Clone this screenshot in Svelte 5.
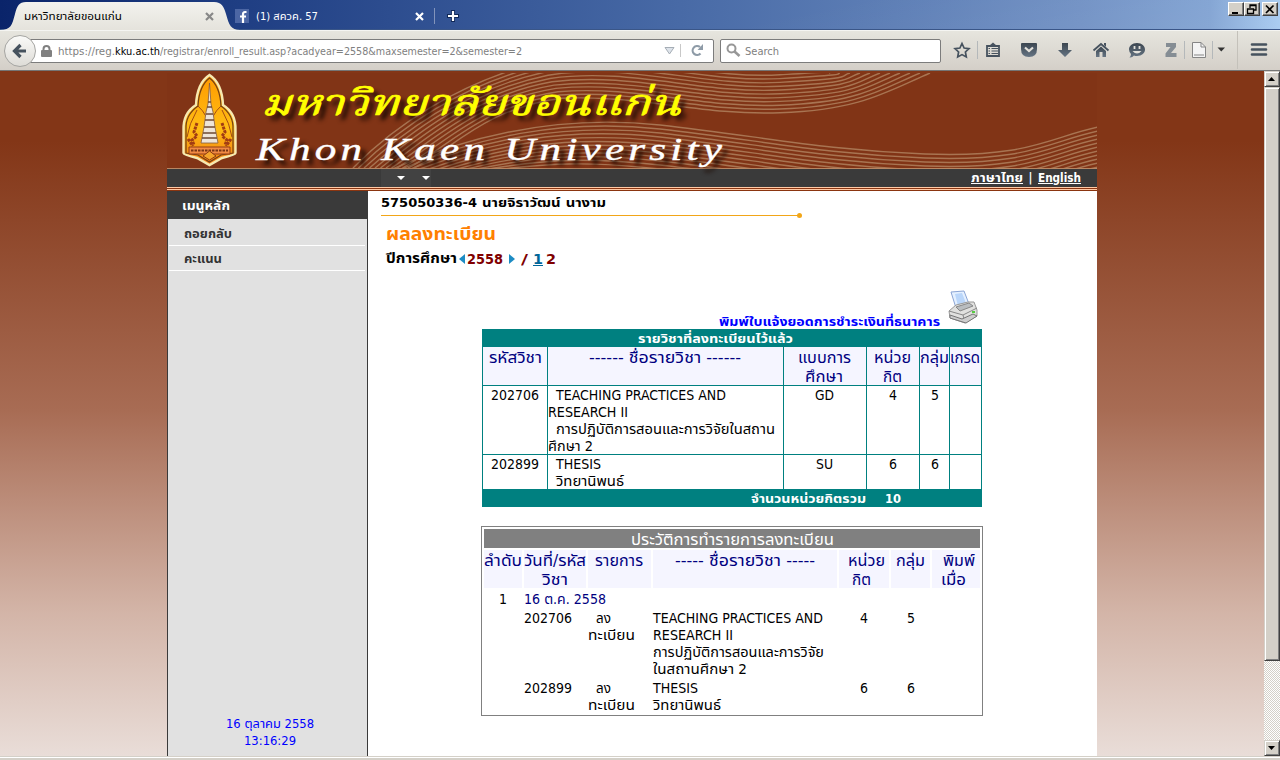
<script lang="ts">
  // Scales a run of text horizontally so that it takes exactly `w` pixels.
  function fit(node: HTMLElement, w: number) {
    const natural = node.getBoundingClientRect().width;
    if (!w || !natural) return;
    node.style.transform = `scaleX(${w / natural})`;
    node.style.marginRight = `${w - natural}px`;
  }

  type Line = [string, number, number];
  const head: Line[][] = [
    [['รหัสวิชา', 53, 6]],
    [['------ ชื่อรายวิชา ------', 152, 41]],
    [['แบบการ', 53, 14], ['ศึกษา', 38, 21]],
    [['หน่วย', 37, 7], ['กิต', 19, 16]],
    [['กลุ่ม', 29, 0]],
    [['เกรด', 30, 0]]
  ];
  const rows: Line[][][] = [
    [
      [['202706', 48, 8]],
      [['TEACHING PRACTICES AND', 170, 8], ['RESEARCH II', 80, 0], ['การปฏิบัติการสอนและการวิจัยในสถาน', 219, 8], ['ศึกษา 2', 45, 0]],
      [['GD', 19, 31]],
      [['4', 8, 22]],
      [['5', 8, 11]],
      []
    ],
    [
      [['202899', 48, 8]],
      [['THESIS', 45, 8], ['วิทยานิพนธ์', 68, 8]],
      [['SU', 17, 32]],
      [['6', 8, 22]],
      [['6', 8, 11]],
      []
    ]
  ];
  const histHead: Line[][] = [
    [['ลำดับ', 38, 0]],
    [['วันที่/รหัส', 62, 0], ['วิชา', 26, 18]],
    [['รายการ', 48, 7]],
    [['----- ชื่อรายวิชา -----', 140, 22]],
    [['หน่วย', 37, 9], ['กิต', 19, 13]],
    [['กลุ่ม', 29, 5]],
    [['พิมพ์', 32, 11], ['เมื่อ', 25, 9]]
  ];
  const histRows: Line[][][] = [
    [
      [],
      [['202706', 48, 0]],
      [['ลง', 15, 8], ['ทะเบียน', 47, 0]],
      [['TEACHING PRACTICES AND', 170, 0], ['RESEARCH II', 80, 0], ['การปฏิบัติการสอนและการวิจัย', 171, 0], ['ในสถานศึกษา 2', 94, 0]],
      [['4', 8, 21]],
      [['5', 8, 16]],
      []
    ],
    [
      [],
      [['202899', 48, 0]],
      [['ลง', 15, 8], ['ทะเบียน', 47, 0]],
      [['THESIS', 45, 0], ['วิทยานิพนธ์', 68, 0]],
      [['6', 8, 21]],
      [['6', 8, 16]],
      []
    ]
  ];
  const waves = Array.from({ length: 12 }, (_, i) => i);
</script>

{#snippet t(text: string, w: number, ml: number = 0)}
  <span class="t" style:margin-left="{ml}px" use:fit={w}>{text}</span>
{/snippet}

{#snippet cell(lines: Line[])}
  <div class="cell">
    {#each lines as l}<div class="line">{@render t(l[0], l[1], l[2])}</div>{/each}
  </div>
{/snippet}

<div class="window">
  <header class="tabs">
    <svg class="tabshape" width="240" height="30">
      <defs><linearGradient id="tab" x1="0" y1="0" x2="0" y2="1"><stop offset="0" stop-color="#f3f2ee" /><stop offset="1" stop-color="#e5e3dc" /></linearGradient></defs>
      <path d="M0 30C11 30 12 25 15 14C17 6 19 2 26 2H214C222 2 224 7 226 14C229 25 231 30 240 30Z" fill="url(#tab)" />
    </svg>
    <div class="tab one">
      {@render t('มหาวิทยาลัยขอนแก่น', 98)}
      <svg width="9" height="9"><path d="M1 1L8 8M8 1L1 8" stroke="#888" stroke-width="2.2" /></svg>
    </div>
    <div class="tab two">
      <svg width="14" height="14"><rect width="14" height="14" fill="#4c66a4" /><path d="M8 14V5.500Q8 3 10 3H11.500M5 7.500H11" fill="none" stroke="#fff" stroke-width="2.2" /></svg>
      {@render t('(1) สควค. 57', 62, 7)}
      <svg class="close" width="9" height="9"><path d="M1 1L8 8M8 1L1 8" stroke="#fff" stroke-width="2.2" /></svg>
    </div>
    <svg class="plus" width="12" height="12"><path d="M6 0V12M0 6H12" stroke="#102858" stroke-width="4" /><path d="M6 1V11M1 6H11" stroke="#fff" stroke-width="2.2" /></svg>
    <div class="winbtns">
      <b><svg width="12" height="11"><path d="M2 9H8" stroke="#000" stroke-width="2" /></svg></b>
      <b><svg width="12" height="11"><path d="M4 4V1H10V6H8M4 1.500H10M1.500 5H7.500V9.500H1.500ZM1 5H8" fill="none" stroke="#000" stroke-width="1.3" /></svg></b>
      <b class="x"><svg width="12" height="11"><path d="M2 1.500L9.500 9M9.500 1.500L2 9" stroke="#000" stroke-width="1.7" /></svg></b>
    </div>
  </header>

  <div class="toolbar">
    <div class="back"><svg width="16" height="16"><path d="M8.500 2L2.500 8L8.500 14M3 8H14" fill="none" stroke="#46525e" stroke-width="3.2" /></svg></div>
    <div class="url">
      <svg width="11" height="12"><path d="M2.500 6V4Q2.500 1 5.500 1T8.500 4V6" fill="none" stroke="#808080" stroke-width="2" /><rect y="5" width="11" height="7" rx="1" fill="#808080" /></svg>
      {@render t('https://reg.', 57, 6)}
      <span class="host">{@render t('kku.ac.th', 45)}</span>
      {@render t('/registrar/enroll_result.asp?acadyear=2558&maxsemester=2&semester=2', 362)}
      <svg class="drop" width="11" height="8"><path d="M1 .5H10L5.500 7Z" fill="#dde3ea" stroke="#a5adb5" /></svg>
      <svg class="reload" width="13" height="13" viewBox="0 0 13 13"><path d="M9.500 9.500A4.500 4.500 0 1 1 9 3" fill="none" stroke="#8e9ba7" stroke-width="2.200" /><path d="M12 0V6H6.500Z" fill="#8e9ba7" /></svg>
    </div>
    <div class="search">
      <svg width="15" height="15"><circle cx="5.500" cy="5.500" r="4" fill="none" stroke="#979797" stroke-width="2" /><path d="M8.500 8.500L13.500 13" stroke="#979797" stroke-width="2.600" /></svg>
      {@render t('Search', 34, 4)}
    </div>
    <svg class="icons" width="339" height="39" viewBox="941 31 339 39">
      <defs><linearGradient id="ic" x1="0" y1="0" x2="0" y2="1"><stop offset="0" stop-color="#3c4650" /><stop offset="1" stop-color="#667584" /></linearGradient></defs>
      <path d="M962 43.500L964.100 48L969 48.600L965.400 52L966.300 57L962 54.600L957.700 57L958.600 52L955 48.600L959.900 48Z" fill="none" stroke="#46525e" stroke-width="1.700" />
      <path d="M977.500 41V59M1184.500 41V59M1212.500 41V59" stroke="#b4b8ba" />
      <path d="M1237.500 31V69" stroke="#c4c1ba" />
      <path d="M987 46H999V56H987Z" fill="none" stroke="#46525e" stroke-width="1.800" />
      <path d="M989 46L993 42.500L997 46Z" fill="#46525e" />
      <path d="M988.500 48.500H990M991.500 48.500H998M988.500 51H990M991.500 51H998M988.500 53.500H990M991.500 53.500H998" stroke="#46525e" stroke-width="1.200" />
      <path d="M1022 43H1036Q1037 43 1037 44V49Q1037 57 1029 57T1021 49V44Q1021 43 1022 43Z" fill="url(#ic)" />
      <path d="M1025 47.500L1029 51L1033 47.500" fill="none" stroke="#e3e1db" stroke-width="2.200" />
      <path d="M1062 43H1068V50H1072L1065 57L1058 50H1062Z" fill="url(#ic)" />
      <path d="M1093.500 50.500L1101 44L1108.500 50.500" fill="none" stroke="#46525e" stroke-width="1.800" />
      <path d="M1096 51L1101 46.500L1106 51V57H1102.500V52H1099.500V57H1096Z" fill="url(#ic)" /><path d="M1104 43H1106V47L1104 45Z" fill="#46525e" />
      <path d="M1137 43C1142 43 1145 46 1145 49.500S1142 56 1137 56Q1135 56 1134 55.500Q1132 58 1129.500 57.500Q1131 56 1131 54Q1129 52 1129 49.500C1129 46 1132 43 1137 43Z" fill="url(#ic)" />
      <path d="M1134.500 46V49M1139.500 46V49" stroke="#e3e1db" stroke-width="1.800" /><path d="M1132.500 51H1141.500Q1137 56 1132.500 51Z" fill="#e3e1db" />
      <path d="M1166 43H1176V47L1171 53H1176.500V57H1165.500V53.500L1170.500 47H1166Z" fill="#858d94" />
      <path d="M1192.500 42.500H1201L1205.500 47V57.500H1192.500Z" fill="#f4f4f4" stroke="#858585" /><path d="M1201 42.500V47H1205.500M1194 55H1204" fill="none" stroke="#858585" />
      <path d="M1217.500 47.500H1225L1221.300 51.500Z" fill="#333" />
      <path d="M1252 44.500H1266M1252 49.500H1266M1252 54.500H1266" stroke="#46525e" stroke-width="2.600" stroke-linecap="round" />
    </svg>
  </div>

  <div class="viewport">
    <div class="page">
      <div class="banner">
        <svg width="930" height="95" viewBox="167 73 930 95">
          <defs>
            <linearGradient id="gold" x1="0" y1="0" x2="0" y2="1"><stop offset="0" stop-color="#ff9a00" /><stop offset=".6" stop-color="#ffbd14" /><stop offset="1" stop-color="#f27a12" /></linearGradient>
          </defs>
          <g fill="none" stroke="#b58a66" stroke-width="1.400" opacity=".75">
            {#each waves as i}
              <path d="M{353 + i * 5.5} 168C{395 + i * 5} {125 + i * 2.5} {460 + i * 2} {82 + i * 2.4} {540 + i * 2} {62 + i * 3.3}C{620 + i * 2} {44 + i * 4.6} 700 {76 + i * 3.6} 780 {71 + i * 3.8}S{820 + i * 6} {70 + i * 2} {820 + i * 10} 73" />
              <path d="M{390 + i * 9} 170C{470 + i * 5} {135 + i * 3} 560 {114 + i * 4} 660 {125 + i * 4}S820 {150 + i * 4} 925 {154 + i * 4}S1050 {137 + i * 4} 1098 {127 + i * 4}" />
            {/each}
          </g>
          <path d="M209.500 75Q222 83 223 105Q236 113 235.500 130V153Q235 155 222 158L209.500 165L197 158Q184 155 183.500 153V130Q183 113 196 105Q197 83 209.500 75Z" fill="url(#gold)" stroke="#f6e9b0" stroke-width="2.400" />
          <path d="M209.500 78Q220 86 221 106Q234 115 233 130V153L221 155L209.500 162L198 155L186 153V130Q185 115 198 106Q199 86 209.500 78Z" fill="none" stroke="#713f16" stroke-width="1.200" />
          <path d="M198 106Q208 115 209 128M221 106Q211 115 210 128M187 137Q189 124 197 110M232 137Q230 124 222 110" fill="none" stroke="#a54c12" />
          <path d="M209.500 83L211 104L213 112L215 127L218 143H201L204 127L206 112L208 104Z" fill="#eee5d8" stroke="#815b42" stroke-width=".8" />
          <path d="M208 102H211M207 107H212M206 114H213M205 120H214M204 127H215M203 133H216M202 138H217" stroke="#6d4933" stroke-width="1.300" />
          <path d="M197 123L194 132L197 136L192 140L194 145M222 123L225 132L222 136L227 140L225 145M188 139L193 146M231 139L226 146" fill="none" stroke="#a23d13" stroke-width="3" stroke-dasharray="3 .8" />
          <path d="M189 147H230V154H189Z" fill="#f08a43" stroke="#943d15" />
          <path d="M191 150.500H228" stroke="#773415" stroke-width="2.200" stroke-dasharray="2.500 1" />
          <path d="M203 156L209.500 151L216 156L209.500 160Z" fill="#f5a52b" stroke="#8b3b11" />
        </svg>
        <div class="thai">{@render t('มหาวิทยาลัยขอนแก่น', 420)}</div>
        <div class="eng">{@render t('Khon Kaen University', 470)}</div>
      </div>
      <nav class="lang">
        <div class="drops"><i></i><i></i></div>
        <a href="#th">{@render t('ภาษาไทย', 52)}</a>
        <span class="bar">|</span>
        <a href="#en">{@render t('English', 43)}</a>
      </nav>
      <div class="stripe"></div>
      <div class="cols">
        <aside>
          <div class="menuhead">{@render t('เมนูหลัก', 48)}</div>
          <div class="item">{@render t('ถอยกลับ', 48)}</div>
          <div class="item low">{@render t('คะแนน', 38)}</div>
          <div class="clock">
            <div>{@render t('16 ตุลาคม 2558', 88)}</div>
            <div>{@render t('13:16:29', 52)}</div>
          </div>
        </aside>
        <main>
          <div class="name">{@render t('575050336-4', 96)}{@render t('นายจิราวัฒน์ นางาม', 124, 5)}</div>
          <div class="rule"><i></i></div>
          <div class="title">{@render t('ผลลงทะเบียน', 110)}</div>
          <div class="year">
            {@render t('ปีการศึกษา', 71)}
            <svg width="10" height="10"><path d="M8 0V10L2 5Z" fill="#1d8cc4" /></svg>
            <span class="red">{@render t('2558', 36)}</span>
            <svg class="next" width="8" height="10"><path d="M1 0V10L7 5Z" fill="#1d8cc4" /></svg>
            <span class="red">{@render t('/', 7, 5)}</span>
            <a href="#sem1">{@render t('1', 10, 5)}</a>
            <span class="red">{@render t('2', 10, 3)}</span>
          </div>
          <div class="print">
            {@render t('พิมพ์ใบแจ้งยอดการชำระเงินที่ธนาคาร', 221)}
            <svg width="32" height="34" viewBox="0 0 32 34">
              <path d="M3 2L16 1L21 14L8 18Z" fill="#e4f0ff" stroke="#8ba5d5" /><path d="M7 4L14 3L18 13L10 16Z" fill="#bad6fa" />
              <path d="M1 21L8 15L20 12L26 12L29 20V26L17 33L2 28Z" fill="#e1e1df" stroke="#999" />
              <path d="M1 21L15 25L29 18M15 25L17 33" fill="none" stroke="#888" /><path d="M8 17L21 13L25 16L12 21Z" fill="#b9bdc0" stroke="#888" />
              <path d="M2 25L14 29L25 24L29 26L18 33L2 28Z" fill="#cecece" stroke="#777" /><path d="M24 22H27" stroke="#55cc42" stroke-width="2" />
            </svg>
          </div>
          <section class="teal">
            <div class="caption">{@render t('รายวิชาที่ลงทะเบียนไว้แล้ว', 155)}</div>
            <div class="grid h">{#each head as c}{@render cell(c)}{/each}</div>
            {#each rows as r}<div class="grid">{#each r as c}{@render cell(c)}{/each}</div>{/each}
            <div class="total">{@render t('จำนวนหน่วยกิตรวม', 115)}{@render t('10', 16, 19)}</div>
          </section>
          <section class="history">
            <div class="hcap">{@render t('ประวัติการทำรายการลงทะเบียน', 203)}</div>
            <div class="hgrid h">{#each histHead as c}{@render cell(c)}{/each}</div>
            <div class="hdate">{@render t('1', 8, 15)}<span class="date">{@render t('16 ต.ค. 2558', 82)}</span></div>
            {#each histRows as r}<div class="hgrid body">{#each r as c}{@render cell(c)}{/each}</div>{/each}
          </section>
        </main>
      </div>
    </div>
    <div class="scroll">
      <b><svg width="8" height="4"><path d="M0 4H7L3.500 0Z" /></svg></b>
      <b class="thumb"></b>
      <b class="down"><svg width="8" height="4"><path d="M0 0H7L3.500 4Z" /></svg></b>
    </div>
  </div>
  <footer></footer>
</div>

<style>
  :global(body) { margin: 0; overflow: hidden; }
  .window { width: 1280px; height: 760px; display: flex; flex-direction: column; overflow: hidden; font-family: Tahoma, "DejaVu Sans Condensed", "Noto Sans Thai", Loma, "Noto Sans", sans-serif; font-size: 13.5px; color: #000; }
  .t { display: block; flex: none; width: max-content; white-space: pre; transform-origin: 0 50%; }
  a { color: inherit; text-decoration: underline; }
  svg { display: block; flex: none; }

  .tabs { height: 29px; flex: none; position: relative; display: flex; align-items: center; border-bottom: 1px solid #3a5688; background: linear-gradient(168deg, #ffffff00 60%, #ffffff10), linear-gradient(90deg, #0a246a 0, #1f3e83 240px, #486aa6 680px, #7191c4 1080px, #80a2d2 1210px, #a6caf0 1280px); font-size: 11px; }
  .tabshape { position: absolute; left: 0; top: 0; }
  .tab { display: flex; align-items: center; position: relative; height: 16px; line-height: 17px; margin-top: 3px; }
  .one { margin-left: 24px; width: 190px; justify-content: space-between; }
  .two { margin-left: 21px; width: 199px; color: #fff; border-right: 1px solid #8294bb; }
  .two .close { margin-left: 97px; }
  .plus { margin: 3px 0 0 12px; }
  .winbtns { display: flex; margin: -12px 2px 0 auto; }
  .winbtns b { box-sizing: border-box; width: 16px; height: 14px; background: #d4d0c8; border: 1px solid; border-color: #fff #404040 #404040 #fff; box-shadow: inset -1px -1px #808080; padding: 1px; }
  .winbtns .x { margin-left: 2px; }

  .toolbar { box-sizing: border-box; height: 41px; flex: none; display: flex; align-items: center; background: linear-gradient(#e6e5de, #d4cfc8); border-top: 1px solid #f5f5f2; border-bottom: 1px solid #757575; font-size: 11px; color: #808080; }
  .back { box-sizing: border-box; width: 32px; height: 32px; border-radius: 50%; border: 1px solid #a5a5a2; background: linear-gradient(#fafaf8, #dedcd7); display: flex; align-items: center; justify-content: center; margin-left: 4px; z-index: 1; }
  .url, .search { box-sizing: border-box; height: 24px; border: 1px solid #7c7c7c; background: #fff; border-radius: 2px; display: flex; align-items: center; }
  .url { width: 690px; margin-left: -12px; padding-left: 16px; }
  .url .t, .search .t { margin-top: 1px; }
  .host { color: #000; }
  .drop { margin-left: 142px; }
  .reload { margin-left: 5px; padding-left: 10px; border-left: 1px solid #c8c8c8; }
  .search { width: 221px; margin-left: 6px; padding-left: 5px; }

  .viewport { flex: 1; display: flex; justify-content: space-between; min-height: 0; background: linear-gradient(#833617 0, #833617 70px, #a86c54 340px, #d3b4a7 540px, #e9ddd8 685px); }
  .page { width: 930px; margin: 2px 0 0 167px; display: flex; flex-direction: column; }
  .banner { position: relative; height: 95px; flex: none; background: #813416; border-bottom: 1px solid #b78562; }
  .thai, .eng { position: absolute; font-style: italic; text-shadow: 4px 5px 4px #1d0a03; }
  .thai { left: 94px; top: 5px; font: italic 36px/56px "Norasi", "Noto Serif Thai", "Liberation Serif", serif; color: #ff0; -webkit-text-stroke: .7px #ff0; }
  .eng { left: 89px; top: 60px; font: italic 31px/34px "Z003", "URW Chancery L", "Liberation Serif", serif; color: #fff; letter-spacing: 3px; -webkit-text-stroke: .4px #fff; }
  .lang { height: 18px; flex: none; background: #3a3a3a; display: flex; align-items: center; color: #fff; font-weight: bold; font-size: 12px; line-height: 18px; }
  .drops { display: flex; gap: 17px; align-items: center; margin-left: 214px; width: 34px; height: 18px; background: #424242; padding-left: 16px; margin-right: 540px; }
  .drops i { border: 4px solid transparent; border-top-color: #fff; border-bottom: 0; }
  .bar { width: 15px; text-align: center; }
  .stripe { height: 4px; flex: none; background: linear-gradient(#ffc9a5 0 1px, #8b3510 1px 2px, #ffc9a5 2px 3px, #8b3510 3px); }
  .cols { flex: 1; min-height: 0; display: flex; }
  aside { box-sizing: border-box; width: 201px; background: #e1e1e1; border: solid #3a3a3a; border-width: 0 1px; display: flex; flex-direction: column; font-weight: bold; font-size: 12px; color: #333; }
  .menuhead { background: #3a3a3a; color: #fff; height: 28px; line-height: 30px; padding-left: 14px; }
  .item { height: 26px; line-height: 30px; margin: 0 2px 0 1px; padding-left: 15px; border-bottom: 1px solid #fff; }
  .low { height: 24px; line-height: 27px; }
  .clock { margin-top: auto; padding-bottom: 7px; line-height: 16.500px; font-weight: normal; color: #00f; display: flex; flex-direction: column; align-items: center; padding-left: 4px; }
  main { flex: 1; background: #fff; min-width: 0; }
  .name { height: 24px; line-height: 23px; padding-left: 13px; font-weight: bold; font-size: 13px; display: flex; font-family: "DejaVu Sans", "Noto Sans Thai", Loma, sans-serif; }
  .rule { margin-left: 13px; width: 417px; height: 1px; background: #f2a618; position: relative; }
  .rule i { position: absolute; right: -4px; top: -2px; width: 5px; height: 5px; border-radius: 50%; background: #f2a618; }
  .title { padding-left: 18px; height: 32px; line-height: 36px; color: #ff8000; font-size: 18px; font-weight: bold; }
  .year { padding-left: 18px; height: 22px; display: flex; align-items: center; font-weight: bold; font-size: 13.500px; font-family: "DejaVu Sans", "Noto Sans Thai", Loma, sans-serif; }
  .next { margin-left: 5px; }
  .red { color: maroon; }
  .year a { color: #069; }
  .print { display: flex; align-items: flex-end; height: 55px; margin-left: 351px; color: #00f; font-weight: bold; font-size: 12px; line-height: 16px; padding-bottom: 4px; gap: 8px; }
  .print .t { margin-bottom: -5px; }
  .print svg { margin-bottom: 1px; }

  .cell { background: #fff; min-width: 0; }
  .line { height: 17px; line-height: 18px; display: flex; }
  .body .line { line-height: 16px; }
  .h { color: navy; font-size: 15px; }
  .h .cell { background: #f5f5ff; }
  .h .line { height: 19px; line-height: 22px; }
  .teal { width: 500px; margin-left: 114px; background: teal; color: #fff; }
  .caption { height: 18px; line-height: 19px; padding-left: 156px; font-size: 12.500px; font-weight: bold; }
  .grid { display: grid; grid-template-columns: 64px 235px 82px 52px 29px 31px; gap: 1px; padding: 0 1px; margin-bottom: 1px; color: #000; }
  .grid.h { color: navy; }
  .total { height: 18px; line-height: 19px; margin-top: -1px; padding-left: 269px; font-weight: bold; font-size: 12.500px; display: flex; }
  .history { box-sizing: border-box; width: 502px; height: 190px; margin: 19px 0 0 113px; border: 1px solid #808080; padding: 2px; display: flex; flex-direction: column; gap: 2px; color: #000; }
  .hcap { background: #808080; color: #fff; height: 19px; line-height: 22px; padding-left: 147px; font-size: 15px; flex: none; }
  .hgrid { display: grid; grid-template-columns: 38px 62px 63px 184px 50px 39px 48px; gap: 2px; }
  .hdate { display: flex; height: 18px; line-height: 18px; flex: none; }
  .date { margin-left: 17px; color: navy; }

  .scroll { width: 16px; display: flex; flex-direction: column; background: repeating-conic-gradient(#d4d0c8 0 25%, #fff 0 50%) 0 0 / 2px 2px; }
  .scroll b { box-sizing: border-box; height: 16px; background: #d4d0c8; border: 1px solid; border-color: #d4d0c8 #404040 #404040 #d4d0c8; box-shadow: inset 1px 1px #fff, inset -1px -1px #808080; display: flex; align-items: center; justify-content: center; }
  .scroll .thumb { height: 574px; }
  .scroll .down { margin-top: auto; }
  footer { height: 4px; flex: none; background: linear-gradient(#d4d0c8 0 1px, #fff 1px 2px, #d4d0c8 2px); }
</style>
